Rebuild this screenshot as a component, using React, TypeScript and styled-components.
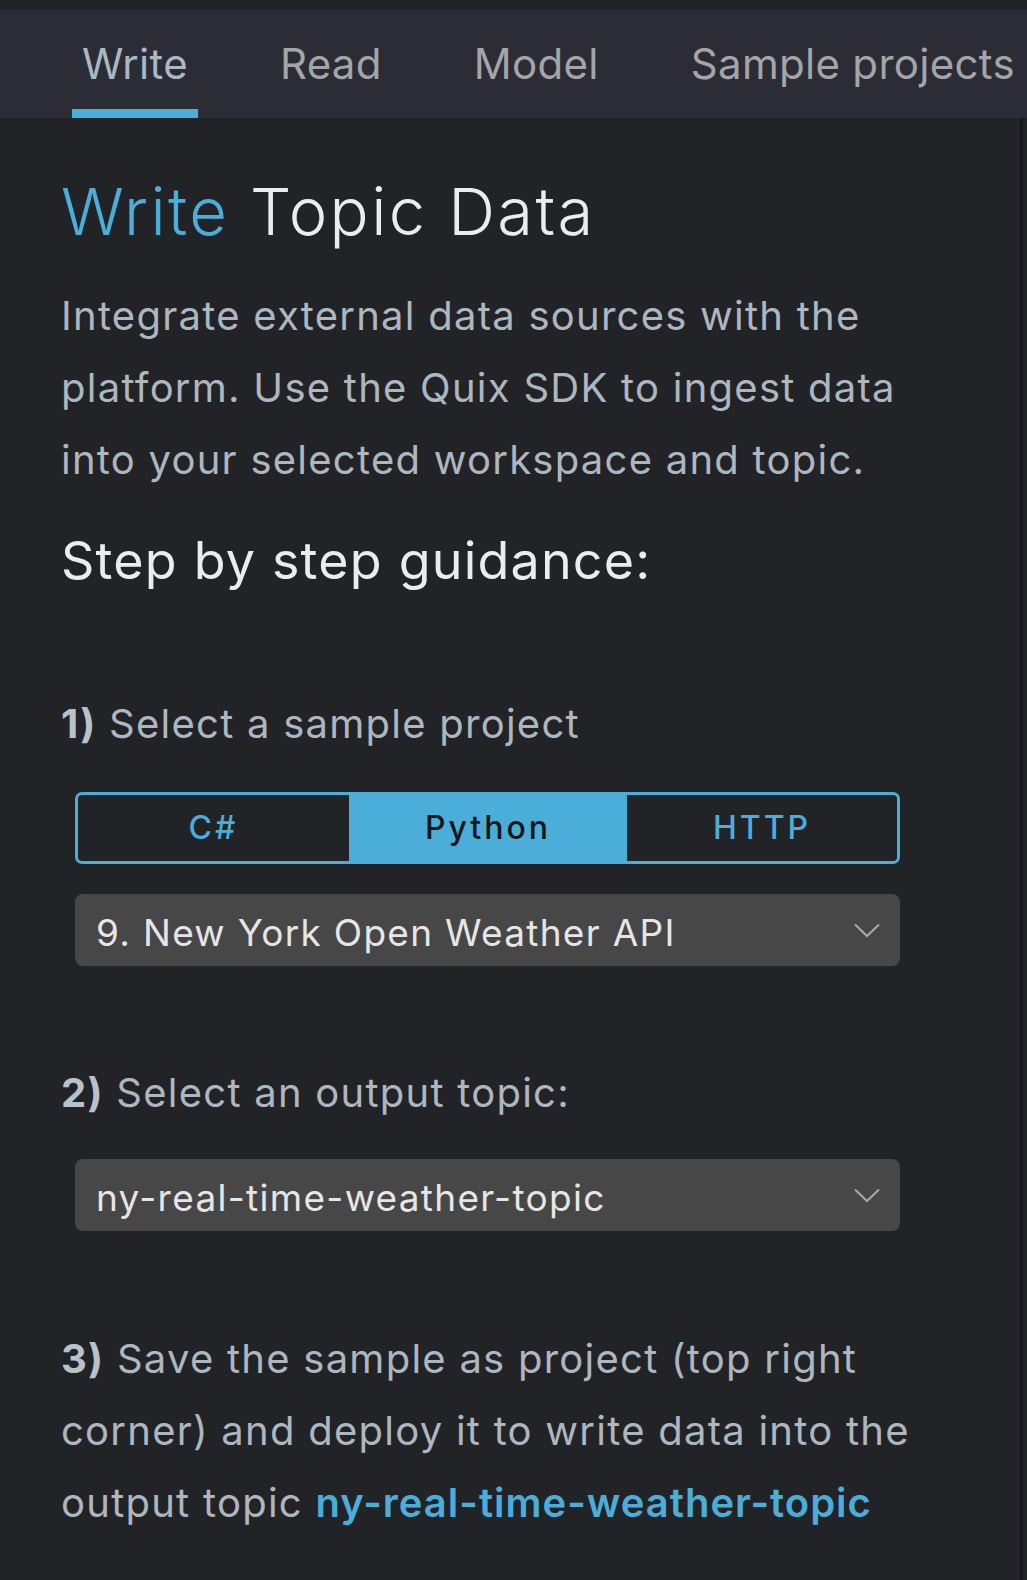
import React from 'react';
import styled, { createGlobalStyle } from 'styled-components';

const BLUE = '#4aaed9';

const GlobalStyle = createGlobalStyle`
  html, body {
    margin: 0;
    padding: 0;
    background: #222327;
  }
  body {
    font-family: Inter, "Noto Sans", sans-serif;
  }
  * {
    box-sizing: border-box;
  }
`;

const Page = styled.div`
  min-height: 1580px;
  display: flex;
  flex-direction: column;
  background: #222327;
`;

const TopStrip = styled.div`
  height: 10px;
  background: #212226;
`;

const TabBar = styled.nav`
  height: 108px;
  display: flex;
  gap: 72px;
  padding-left: 72px;
  background: #2b2c35;
  overflow: hidden;
  white-space: nowrap;
`;

const Tab = styled.div<{ $active?: boolean }>`
  padding: 0 10px;
  font-size: 42px;
  font-weight: 400;
  letter-spacing: 0.3px;
  line-height: 108px;
  color: ${(p) => (p.$active ? '#a9b8c3' : '#a3a5a9')};
  box-shadow: ${(p) => (p.$active ? `inset 0 -9px 0 ${BLUE}` : 'none')};
`;

const Body = styled.div`
  flex: 1;
  display: flex;
`;

const Content = styled.main`
  width: 1023px;
  padding: 0 0 40px 61px;
  border-right: 3px solid #0f171a;
  display: flex;
  flex-direction: column;
`;

const Title = styled.h1`
  margin: 54px 0 0;
  font-size: 65px;
  font-weight: 300;
  letter-spacing: 2.4px;
  line-height: 80px;
  color: #ebecef;
`;

const Accent = styled.span`
  color: ${BLUE};
`;

const Text = styled.p<{ $gap: number }>`
  margin: ${(p) => p.$gap}px 0 0;
  font-size: 40px;
  font-weight: 400;
  letter-spacing: 1.25px;
  line-height: 72px;
  color: #adb7bf;
  white-space: nowrap;
`;

const StepNo = styled.b`
  font-weight: 700;
  color: #b9c2c9;
`;

const Link = styled.a`
  font-weight: 600;
  letter-spacing: 1px;
  color: ${BLUE};
  text-decoration: none;
`;

const Guidance = styled.h2`
  margin: 35px 0 0;
  font-size: 52px;
  font-weight: 400;
  letter-spacing: 1.2px;
  line-height: 60px;
  color: #ebecef;
`;

const Control = styled.div<{ $gap: number }>`
  margin: ${(p) => p.$gap}px 0 0 14px;
  width: 825px;
`;

const Toggle = styled.div`
  height: 72px;
  display: grid;
  grid-template-columns: 271px 278px 1fr;
  border: 3px solid ${BLUE};
  border-radius: 7px;
  overflow: hidden;
`;

const Segment = styled.div<{ $selected?: boolean }>`
  font-size: 32px;
  font-weight: 500;
  letter-spacing: 3px;
  line-height: 66px;
  text-align: center;
  color: ${(p) => (p.$selected ? '#15171a' : BLUE)};
  background: ${(p) => (p.$selected ? BLUE : 'transparent')};
`;

const Select = styled.div`
  height: 72px;
  display: flex;
  align-items: flex-start;
  justify-content: space-between;
  padding: 5px 20px 0 21px;
  border-radius: 8px;
  background: #474747;
`;

const SelectValue = styled.span`
  font-size: 37px;
  letter-spacing: 1.3px;
  line-height: 67px;
  color: #e6e6e6;
`;

const Chevron = styled.svg`
  margin-top: 24px;
  width: 26px;
  height: 15px;
  flex-shrink: 0;
`;

function ChevronDown() {
  return (
    <Chevron viewBox="0 0 26 15" fill="none">
      <polyline points="1,1.5 13,13 25,1.5" stroke="#a9a9a9" strokeWidth="2" />
    </Chevron>
  );
}

const TABS = ['Write', 'Read', 'Model', 'Sample projects'];
const LANGS = ['C#', 'Python', 'HTTP'];

export default function App() {
  return (
    <Page>
      <GlobalStyle />
      <TopStrip />
      <TabBar>
        {TABS.map((t) => (
          <Tab key={t} $active={t === 'Write'}>
            {t}
          </Tab>
        ))}
      </TabBar>
      <Body>
        <Content>
          <Title>
            <Accent>Write</Accent> Topic Data
          </Title>
          <Text $gap={28}>
            Integrate external data sources with the
            <br />
            platform. Use the Quix SDK to ingest data
            <br />
            into your selected workspace and topic.
          </Text>
          <Guidance>Step by step guidance:</Guidance>
          <Text $gap={97}>
            <StepNo>1)</StepNo> Select a sample project
          </Text>
          <Control $gap={32}>
            <Toggle>
              {LANGS.map((l) => (
                <Segment key={l} $selected={l === 'Python'}>
                  {l}
                </Segment>
              ))}
            </Toggle>
          </Control>
          <Control $gap={30}>
            <Select>
              <SelectValue>9. New York Open Weather API</SelectValue>
              <ChevronDown />
            </Select>
          </Control>
          <Text $gap={91}>
            <StepNo>2)</StepNo> Select an output topic:
          </Text>
          <Control $gap={30}>
            <Select>
              <SelectValue>ny-real-time-weather-topic</SelectValue>
              <ChevronDown />
            </Select>
          </Control>
          <Text $gap={92}>
            <StepNo>3)</StepNo> Save the sample as project (top right
            <br />
            corner) and deploy it to write data into the
            <br />
            output topic <Link>ny-real-time-weather-topic</Link>
          </Text>
        </Content>
      </Body>
    </Page>
  );
}
